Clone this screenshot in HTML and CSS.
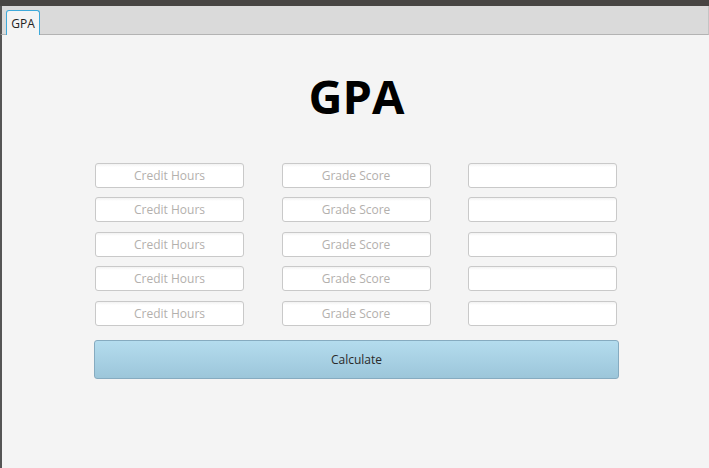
FILE: index.html
```html
<!DOCTYPE html>
<html>
<head>
<meta charset="utf-8">
<link rel="stylesheet" href="styles.css">
</head>
<body>
<div class="window">
  <div class="topbar"></div>
  <div class="tabbar">
    <div class="tab">GPA</div>
  </div>
  <div class="content">
    <h1 class="title">GPA</h1>
    <div class="grid">
      <input class="field" placeholder="Credit Hours">
      <input class="field" placeholder="Grade Score">
      <input class="field">
      <input class="field" placeholder="Credit Hours">
      <input class="field" placeholder="Grade Score">
      <input class="field">
      <input class="field" placeholder="Credit Hours">
      <input class="field" placeholder="Grade Score">
      <input class="field">
      <input class="field" placeholder="Credit Hours">
      <input class="field" placeholder="Grade Score">
      <input class="field">
      <input class="field" placeholder="Credit Hours">
      <input class="field" placeholder="Grade Score">
      <input class="field">
    </div>
    <button class="calc">Calculate</button>
  </div>
</div>
</body>
</html>
```

FILE: styles.css
```css
html, body {
  margin: 0;
  padding: 0;
}
body {
  width: 709px;
  height: 468px;
  overflow: hidden;
  font-family: "Open Sans", "Noto Sans", sans-serif;
  background: #f4f4f4;
}
.window {
  display: flex;
  flex-direction: column;
  height: 468px;
}
.topbar {
  height: 6px;
  background: #474543;
  flex: none;
}
.tabbar {
  height: 28px;
  flex: none;
  background: #dadada;
  border-bottom: 1px solid #b3b3b3;
  border-left: 2px solid #555;
  border-right: 1px solid #c4c4c4;
  display: flex;
  align-items: flex-end;
  padding-left: 4px;
}
.tab {
  width: 32px;
  height: 23px;
  margin-bottom: -1px;
  background: #f4f4f4;
  border: 1px solid #3ea9da;
  border-bottom: none;
  border-radius: 3px 3px 0 0;
  font-size: 12px;
  color: #222;
  display: flex;
  align-items: center;
  justify-content: center;
  padding-top: 1px;
  box-sizing: content-box;
}
.content {
  flex: 1;
  border-left: 2px solid #555;
  background: #f4f4f4;
  display: flex;
  flex-direction: column;
  padding-left: 92px;
}
.title {
  margin: 29px 0 0 0;
  width: 525px;
  text-align: center;
  font-size: 47px;
  line-height: 64px;
  font-weight: 700;
  color: #000;
}
.grid {
  margin-top: 35px;
  margin-left: 1px;
  display: grid;
  grid-template-columns: 149px 149px 149px;
  column-gap: 37.5px;
  row-gap: 9.49px;
}
.field {
  box-sizing: border-box;
  height: 25px;
  width: 149px;
  margin: 0;
  border: 1px solid #c9c9c9;
  border-radius: 3px;
  background: linear-gradient(#f2f2f2, #ffffff 3px);
  font-family: "Open Sans", "Noto Sans", sans-serif;
  font-size: 12px;
  text-align: center;
  color: #222;
  padding: 0 6px;
  outline: none;
}
.field::placeholder {
  color: #b3b0ad;
}
.calc {
  margin-top: 14px;
  width: 525px;
  height: 39px;
  border: 1px solid #86abc0;
  border-radius: 3px;
  background: linear-gradient(#b4dcee, #9cc6da);
  font-family: "Open Sans", "Noto Sans", sans-serif;
  font-size: 12px;
  color: #2a2a2a;
  padding: 0;
}
```
